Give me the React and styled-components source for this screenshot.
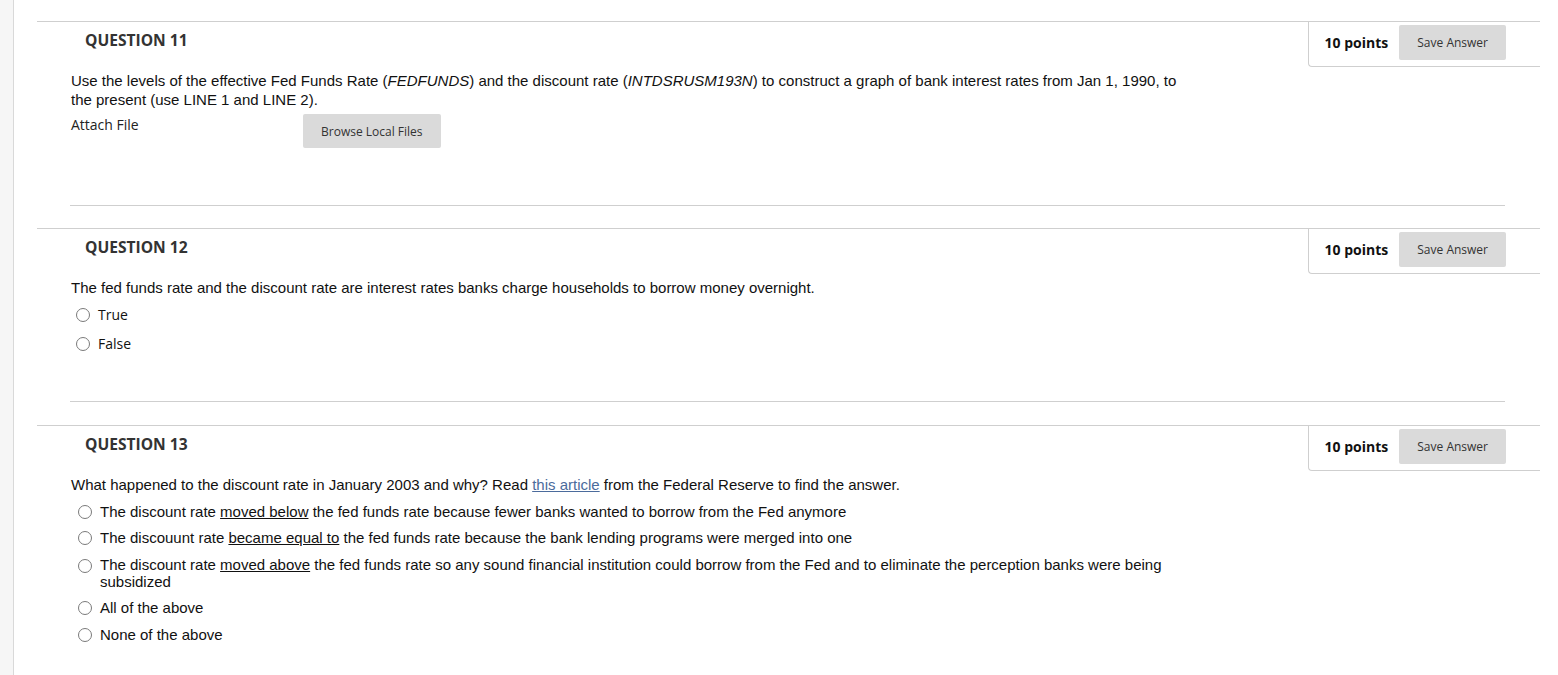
import React from 'react';
import styled, { createGlobalStyle } from 'styled-components';

const GlobalStyle = createGlobalStyle`
  html, body {
    margin: 0;
    padding: 0;
    background: #fff;
  }
  body {
    font-family: 'Liberation Sans', Arial, sans-serif;
    color: #111;
  }
`;

const Page = styled.div`
  display: flex;
  min-height: 675px;
`;

const Sidebar = styled.div`
  flex: none;
  width: 13px;
  background: #f6f6f6;
  border-right: 1px solid #d9d9d9;
`;

const Main = styled.main`
  flex: 1;
  padding: 21px 18px 0 23px;
`;

const Question = styled.section`
  border-top: 1px solid #cfcfcf;
`;

const Header = styled.div`
  display: flex;
  justify-content: space-between;
  align-items: flex-start;
`;

const Title = styled.h2`
  margin: 0;
  padding: 7px 0 0 48px;
  font-family: 'Open Sans', sans-serif;
  font-size: 15.6px;
  font-weight: 700;
  line-height: 22px;
  color: #333;
`;

const PointsBox = styled.div`
  display: flex;
  align-items: center;
  gap: 11px;
  padding: 3px 34px 6px 16px;
  border-left: 1px solid #cfcfcf;
  border-bottom: 1px solid #cfcfcf;
  border-bottom-left-radius: 4px;
`;

const Points = styled.span`
  font-family: 'Open Sans', sans-serif;
  font-size: 14px;
  font-weight: 700;
  color: #111;
`;

const GreyButton = styled.button`
  height: ${p => p.$h || 35}px;
  padding: 0 ${p => p.$pad || 18}px;
  border: none;
  border-radius: 2px;
  background: #dadada;
  font-family: 'Open Sans', sans-serif;
  font-size: 12px;
  color: #333;
  cursor: pointer;
`;

const Body = styled.div`
  padding: 4px 35px 0 34px;
`;

const Text = styled.p`
  margin: 0;
  max-width: 1110px;
  font-size: 15px;
  line-height: 19px;
  color: #111;
`;

const Under = styled.span`
  text-decoration: underline;
`;

const Link = styled.a`
  color: #4b6b9c;
  text-decoration: underline;
`;

const AttachRow = styled.div`
  display: flex;
  align-items: flex-start;
  margin-top: 5px;
`;

const AttachLabel = styled.span`
  width: 232px;
  padding-top: 1px;
  font-family: 'Open Sans', sans-serif;
  font-size: 14px;
  line-height: 19px;
  color: #222;
`;

const Options = styled.div`
  display: flex;
  flex-direction: column;
  gap: ${p => p.$gap}px;
  margin-top: ${p => p.$top}px;
  padding-left: ${p => p.$indent}px;
  max-width: ${p => 1110 - p.$indent}px;
`;

const Option = styled.label`
  display: flex;
  align-items: flex-start;
  gap: 8px;
  font-family: ${p => (p.$sans ? "'Open Sans', sans-serif" : "'Liberation Sans', Arial, sans-serif")};
  font-size: ${p => (p.$sans ? 14 : 15)}px;
  line-height: ${p => p.$lh}px;
  color: #111;
`;

const Radio = styled.span`
  flex: none;
  box-sizing: border-box;
  width: 14px;
  height: 14px;
  margin-top: ${p => p.$offset}px;
  border: 1px solid #7a7a7a;
  border-radius: 50%;
  background: #fff;
`;

const Rule = styled.hr`
  margin: ${p => p.$top}px 35px ${p => p.$bottom || 22}px 33px;
  border: none;
  border-top: 1px solid #cfcfcf;
`;

const QuestionHeader = ({ number }) => (
  <Header>
    <Title>QUESTION {number}</Title>
    <PointsBox>
      <Points>10 points</Points>
      <GreyButton>Save Answer</GreyButton>
    </PointsBox>
  </Header>
);

const App = () => {
  return (
    <>
      <GlobalStyle />
      <Page>
        <Sidebar />
        <Main>
          <Question>
            <QuestionHeader number={11} />
            <Body>
              <Text>
                Use the levels of the effective Fed Funds Rate (<i>FEDFUNDS</i>) and the discount rate (<i>INTDSRUSM193N</i>) to construct a graph of bank interest rates from Jan 1, 1990, to the present (use LINE 1 and LINE 2).
              </Text>
              <AttachRow>
                <AttachLabel>Attach File</AttachLabel>
                <GreyButton $h={34} $pad={18}>Browse Local Files</GreyButton>
              </AttachRow>
            </Body>
            <Rule $top={57} />
          </Question>

          <Question>
            <QuestionHeader number={12} />
            <Body>
              <Text>The fed funds rate and the discount rate are interest rates banks charge households to borrow money overnight.</Text>
              <Options $gap={9} $top={8} $indent={5}>
                <Option $sans $lh={20}><Radio $offset={3} />True</Option>
                <Option $sans $lh={20}><Radio $offset={3} />False</Option>
              </Options>
            </Body>
            <Rule $top={47} $bottom={23} />
          </Question>

          <Question>
            <QuestionHeader number={13} />
            <Body>
              <Text>
                What happened to the discount rate in January 2003 and why? Read <Link href="#">this article</Link> from the Federal Reserve to find the answer.
              </Text>
              <Options $gap={9.6} $top={8.5} $indent={7}>
                <Option $lh={17}>
                  <Radio $offset={2} />
                  <span>The discount rate <Under>moved below</Under> the fed funds rate because fewer banks wanted to borrow from the Fed anymore</span>
                </Option>
                <Option $lh={17}>
                  <Radio $offset={2} />
                  <span>The discouunt rate <Under>became equal to</Under> the fed funds rate because the bank lending programs were merged into one</span>
                </Option>
                <Option $lh={17}>
                  <Radio $offset={3} />
                  <span>The discount rate <Under>moved above</Under> the fed funds rate so any sound financial institution could borrow from the Fed and to eliminate the perception banks were being subsidized</span>
                </Option>
                <Option $lh={17}>
                  <Radio $offset={2} />
                  <span>All of the above</span>
                </Option>
                <Option $lh={17}>
                  <Radio $offset={2} />
                  <span>None of the above</span>
                </Option>
              </Options>
            </Body>
          </Question>
        </Main>
      </Page>
    </>
  );
};

export default App;
